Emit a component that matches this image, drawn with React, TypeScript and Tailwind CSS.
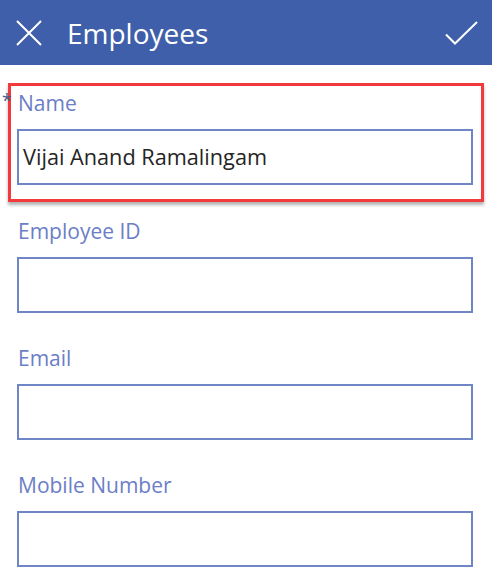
interface FieldProps {
  label: string;
  value?: string;
}

function Field({ label, value }: FieldProps) {
  return (
    <div>
      <div className="ml-[18px] h-[28px] text-[21px] leading-[28px] text-[#6b7ec6]">{label}</div>
      <div className="mt-[12px] ml-[17px] flex h-[56px] w-[456px] items-center border-2 border-[#6f86c6] bg-white px-[4px] text-[21.7px] text-[#252525]">
        {value}
      </div>
    </div>
  );
}

export default function App() {
  return (
    <div className="h-[581px] w-[492px] overflow-hidden bg-white font-['Open_Sans',sans-serif]">
      {/* Header */}
      <div className="flex h-[65px] items-center bg-[#3f5fab] pl-[16px] pr-[14px] text-white">
        <svg width="26" height="26" viewBox="0 0 26 26" fill="none" stroke="currentColor" strokeWidth="2">
          <path d="M1 1 25 25M25 1 1 25" />
        </svg>
        <h1 className="ml-[25px] text-[28px] leading-none">Employees</h1>
        <svg className="ml-auto" width="33" height="24" viewBox="0 0 33 24" fill="none" stroke="currentColor" strokeWidth="2">
          <path d="M1 13.5 10 22.5 32 1" />
        </svg>
      </div>

      {/* Highlighted field */}
      <div className="relative mt-[18px]">
        <span className="absolute left-[2px] top-[8px] text-[18px] leading-none text-[#4a5a8a]">*</span>
        <div className="ml-[8px] w-[476px] border-[3px] border-[#f2393c] pt-[3px] pb-[14px] shadow-[0_3px_3px_rgba(0,0,0,0.3)]">
          <div className="-ml-[11px]">
            <Field label="Name" value="Vijai Anand Ramalingam" />
          </div>
        </div>
      </div>

      <div className="mt-[15px] flex flex-col gap-[31px]">
        <Field label="Employee ID" />
        <Field label="Email" />
        <Field label="Mobile Number" />
      </div>
    </div>
  );
}
